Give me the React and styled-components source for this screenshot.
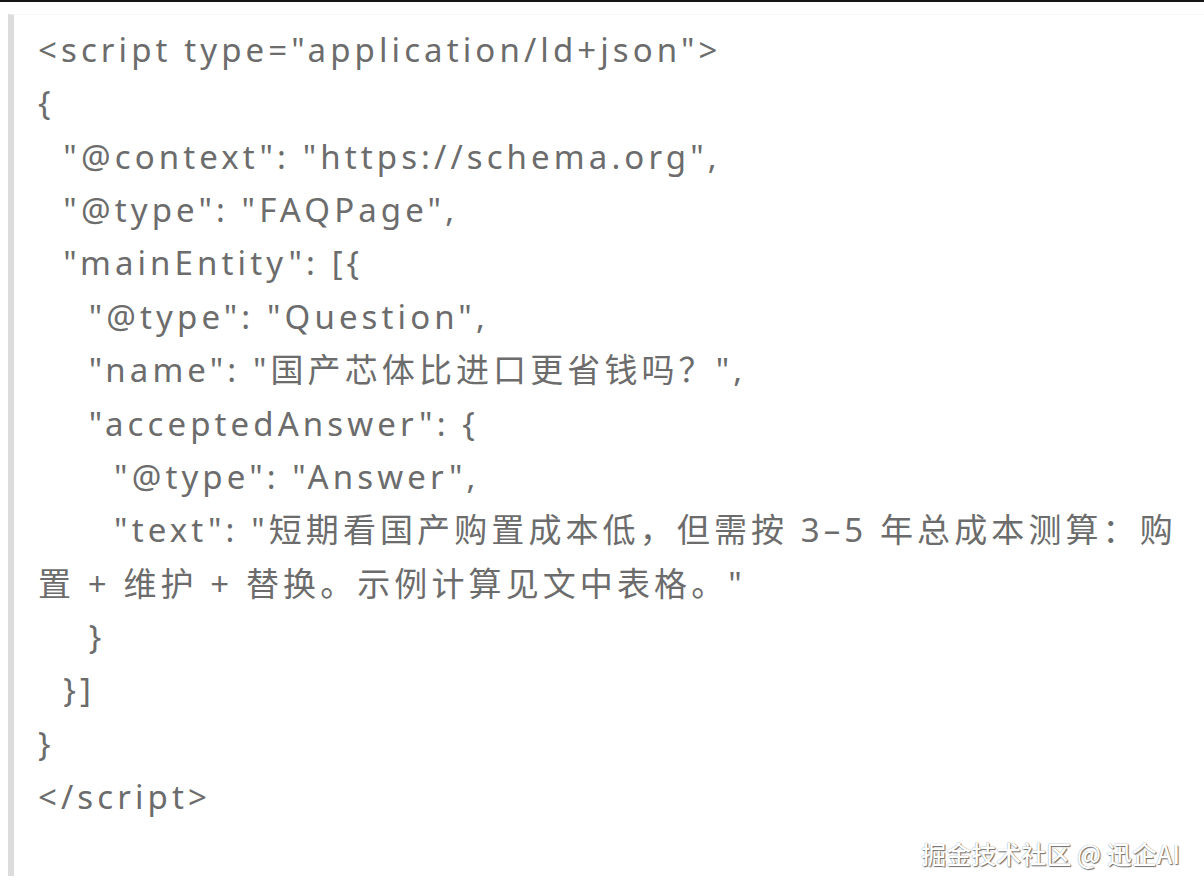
import React from "react";
import styled, { createGlobalStyle } from "styled-components";

// 代码块里的每一行（长行已按截图位置断开）
const lines = [
  '<script type="application/ld+json">',
  "{",
  '  "@context": "https://schema.org",',
  '  "@type": "FAQPage",',
  '  "mainEntity": [{',
  '    "@type": "Question",',
  '    "name": "国产芯体比进口更省钱吗？",',
  '    "acceptedAnswer": {',
  '      "@type": "Answer",',
  '      "text": "短期看国产购置成本低，但需按 3–5 年总成本测算：购',
  '置 + 维护 + 替换。示例计算见文中表格。"',
  "    }",
  "  }]",
  "}",
  "</script>",
];

function App() {
  return (
    <>
      <GlobalStyle />
      <TopRule />
      <Page>
        <CodeBlock>
          {lines.map((line, idx) => (
            <Line key={idx}>{line}</Line>
          ))}
        </CodeBlock>
        <Watermark>掘金技术社区 @ 迅企AI</Watermark>
      </Page>
    </>
  );
}

const GlobalStyle = createGlobalStyle`
  html, body {
    margin: 0;
    padding: 0;
    background: #ffffff;
  }
  body {
    font-family: "Noto Sans", "Noto Sans CJK SC", sans-serif;
  }
`;

const TopRule = styled.div`
  height: 2px;
  background-color: #151515;
`;

const Page = styled.div`
  position: relative;
  height: 891px;
  padding: 12px 0 0 8px;
  box-sizing: border-box;
`;

const CodeBlock = styled.div`
  height: 862px;
  box-sizing: border-box;
  border-left: 6px solid #dcdcdc;
  border-top: 1px solid #f7f7f7;
  padding: 8px 0 0 24px;
  background-color: #ffffff;
`;

const Line = styled.div`
  white-space: pre;
  font-family: "Noto Sans", "Noto Sans CJK SC", sans-serif;
  font-size: 33px;
  line-height: 53.36px;
  letter-spacing: 4.1px;
  color: #6c6c6c;
`;

const Watermark = styled.div`
  position: absolute;
  right: 24px;
  bottom: 26px;
  font-family: "Noto Sans CJK SC", sans-serif;
  font-size: 25px;
  font-weight: 500;
  line-height: 28px;
  color: #ffffff;
  text-shadow: 1px 1px 1px rgba(0, 0, 0, 0.55), 0 0 1px rgba(0, 0, 0, 0.45);
`;

export default App;
